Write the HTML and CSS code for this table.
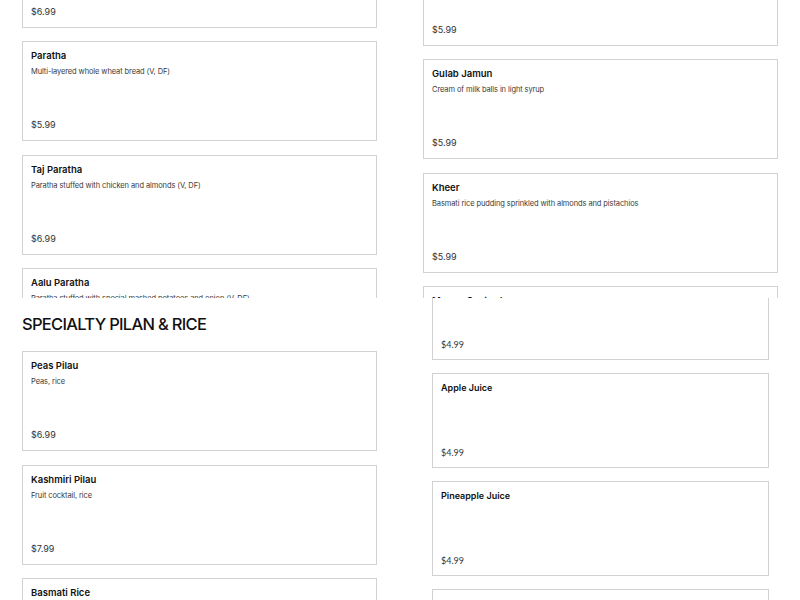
FILE: index.html
```html
<!DOCTYPE html>
<html lang="en">
<head>
    <meta charset="UTF-8">
    <meta name="viewport" content="width=device-width, initial-scale=1.0">
    <title>Menu</title>
    <link rel="stylesheet" href="styles.css">
</head>
<body>
    <div class="panel top">
        <div class="column left-top">
            <div class="card">
                <h3>Chapati</h3>
                <p>Whole wheat flat bread (V, DF)</p>
                <span class="price">$6.99</span>
            </div>
            <div class="card">
                <h3>Paratha</h3>
                <p>Multi-layered whole wheat bread (V, DF)</p>
                <span class="price">$5.99</span>
            </div>
            <div class="card">
                <h3>Taj Paratha</h3>
                <p>Paratha stuffed with chicken and almonds (V, DF)</p>
                <span class="price">$6.99</span>
            </div>
            <div class="card">
                <h3>Aalu Paratha</h3>
                <p>Paratha stuffed with special mashed potatoes and onion (V, DF)</p>
                <span class="price">$6.99</span>
            </div>
        </div>
        <div class="column right-top">
            <div class="card">
                <h3>Ras Malai</h3>
                <p>Cheese patties in sweet milk</p>
                <span class="price">$5.99</span>
            </div>
            <div class="card">
                <h3>Gulab Jamun</h3>
                <p>Cream of milk balls in light syrup</p>
                <span class="price">$5.99</span>
            </div>
            <div class="card">
                <h3>Kheer</h3>
                <p>Basmati rice pudding sprinkled with almonds and pistachios</p>
                <span class="price">$5.99</span>
            </div>
            <div class="card">
                <h3>Mango Custard</h3>
                <p>Mango pudding</p>
                <span class="price">$5.99</span>
            </div>
        </div>
    </div>

    <div class="panel bottom">
        <div class="column left-bottom">
            <h2>SPECIALTY PILAN &amp; RICE</h2>
            <div class="card">
                <h3>Peas Pilau</h3>
                <p>Peas, rice</p>
                <span class="price">$6.99</span>
            </div>
            <div class="card">
                <h3>Kashmiri Pilau</h3>
                <p>Fruit cocktail, rice</p>
                <span class="price">$7.99</span>
            </div>
            <div class="card">
                <h3>Basmati Rice</h3>
                <p>Plain steamed rice</p>
                <span class="price">$4.99</span>
            </div>
        </div>
        <div class="column right-bottom">
            <div class="card drink">
                <h3>Orange Juice</h3>
                <span class="price">$4.99</span>
            </div>
            <div class="card drink">
                <h3>Apple Juice</h3>
                <span class="price">$4.99</span>
            </div>
            <div class="card drink">
                <h3>Pineapple Juice</h3>
                <span class="price">$4.99</span>
            </div>
            <div class="card drink faded">
                <h3>Mango Lassi (yogurt drink)</h3>
                <span class="price">$4.99</span>
            </div>
        </div>
    </div>
</body>
</html>
```

FILE: styles.css
```css
body {
    font-family: Inter, "Noto Sans", sans-serif;
    background-color: #fff;
    color: #111;
    margin: 0;
    padding: 0;
}
.panel {
    display: flex;
    overflow: hidden;
    padding: 0 22px;
}
.top {
    height: 298px;
    gap: 46px;
}
.bottom {
    height: 302px;
    gap: 55px;
}
.column {
    display: flex;
    flex-direction: column;
    gap: 13.5px;
    flex: none;
}
.left-top {
    width: 355px;
    margin-top: -72.5px;
}
.right-top {
    width: 355px;
    margin-top: -54.5px;
}
.left-bottom {
    width: 355px;
}
.right-bottom {
    width: 337px;
    margin-top: -33px;
    gap: 13px;
}
h2 {
    font-size: 16.5px;
    font-weight: 500;
    letter-spacing: -0.7px;
    margin: 15px 0 2.5px;
    line-height: 22px;
    color: #111;
}
.card {
    box-sizing: border-box;
    height: 100px;
    border: 1px solid #d2d2d2;
    padding: 8px 9px 9px 8px;
    display: flex;
    flex-direction: column;
    flex: none;
}
.card h3 {
    font-size: 9.5px;
    font-weight: 600;
    line-height: 12px;
    margin: 0;
    color: #111;
}
.card p {
    font-size: 7.5px;
    letter-spacing: -0.1px;
    line-height: 10px;
    margin: 5px 0 0;
    color: #3a3a3a;
}
.price {
    margin-top: auto;
    font-size: 9px;
    line-height: 12px;
    color: #333;
}
.drink {
    height: 95px;
    font-family: Lato, "Noto Sans", sans-serif;
    padding-bottom: 8px;
}
.drink h3 {
    font-family: Inter, sans-serif;
    font-size: 9px;
}
.faded h3 {
    color: #ddd;
}
```
